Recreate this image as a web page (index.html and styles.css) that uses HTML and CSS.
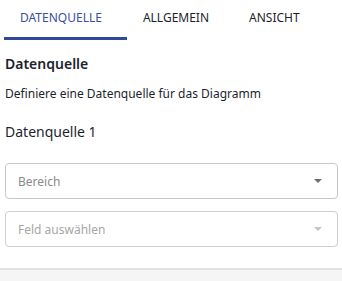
FILE: index.html
```html
<!DOCTYPE html>
<html lang="de">
<head>
    <meta charset="UTF-8">
    <title>Datenquelle</title>
    <link rel="stylesheet" href="styles.css">
</head>
<body>
    <nav class="tabs">
        <div class="tab active">DATENQUELLE</div>
        <div class="tab">ALLGEMEIN</div>
        <div class="tab">ANSICHT</div>
    </nav>

    <main class="panel">
        <h2>Datenquelle</h2>
        <p class="hint">Definiere eine Datenquelle für das Diagramm</p>
        <h3>Datenquelle 1</h3>

        <div class="select">
            <span>Bereich</span>
            <span class="caret"></span>
        </div>
        <div class="select disabled">
            <span>Feld auswählen</span>
            <span class="caret"></span>
        </div>
    </main>

    <footer class="footer"></footer>
</body>
</html>
```

FILE: styles.css
```css
* {
    margin: 0;
    padding: 0;
    box-sizing: border-box;
}

body {
    font-family: 'Noto Sans', 'Open Sans', sans-serif;
    color: #1c1f2e;
    background: white;
    width: 342px;
    height: 281px;
    overflow: hidden;
}

.tabs {
    display: flex;
    height: 40px;
    padding-left: 4px;
}

.tab {
    font-size: 12px;
    line-height: 36px;
    padding: 0 24px 0 16px;
    border-bottom: 3px solid transparent;
    color: #1c1f2e;
}

.tab.active {
    padding-right: 25px;
    color: #3a4fa0;
    border-bottom-color: #31489c;
}

.panel {
    padding: 14px 4px 0 5px;
    height: 228px;
}

.panel h2 {
    font-size: 14px;
    font-weight: 600;
    line-height: 20px;
}

.hint {
    font-size: 12px;
    line-height: 16px;
    margin-top: 12px;
}

.panel h3 {
    font-size: 14px;
    font-weight: 400;
    line-height: 20px;
    margin-top: 20px;
}

.select {
    display: flex;
    align-items: center;
    justify-content: space-between;
    height: 36px;
    border: 1px solid #c8c8c8;
    border-radius: 4px;
    padding: 0 15px 0 12px;
    font-size: 12px;
    color: #8a8a8a;
    margin-top: 21px;
}

.select + .select {
    margin-top: 12px;
}

.caret {
    width: 0;
    height: 0;
    border-left: 4px solid transparent;
    border-right: 4px solid transparent;
    border-top: 4px solid #6e6e6e;
}

.select.disabled {
    color: #a6a6a6;
    border-color: #cfcfcf;
}

.select.disabled .caret {
    border-top-color: #c4c4c4;
}

.footer {
    height: 13px;
    border-top: 2px solid #e2e2e2;
    background: #f5f5f5;
}
```
